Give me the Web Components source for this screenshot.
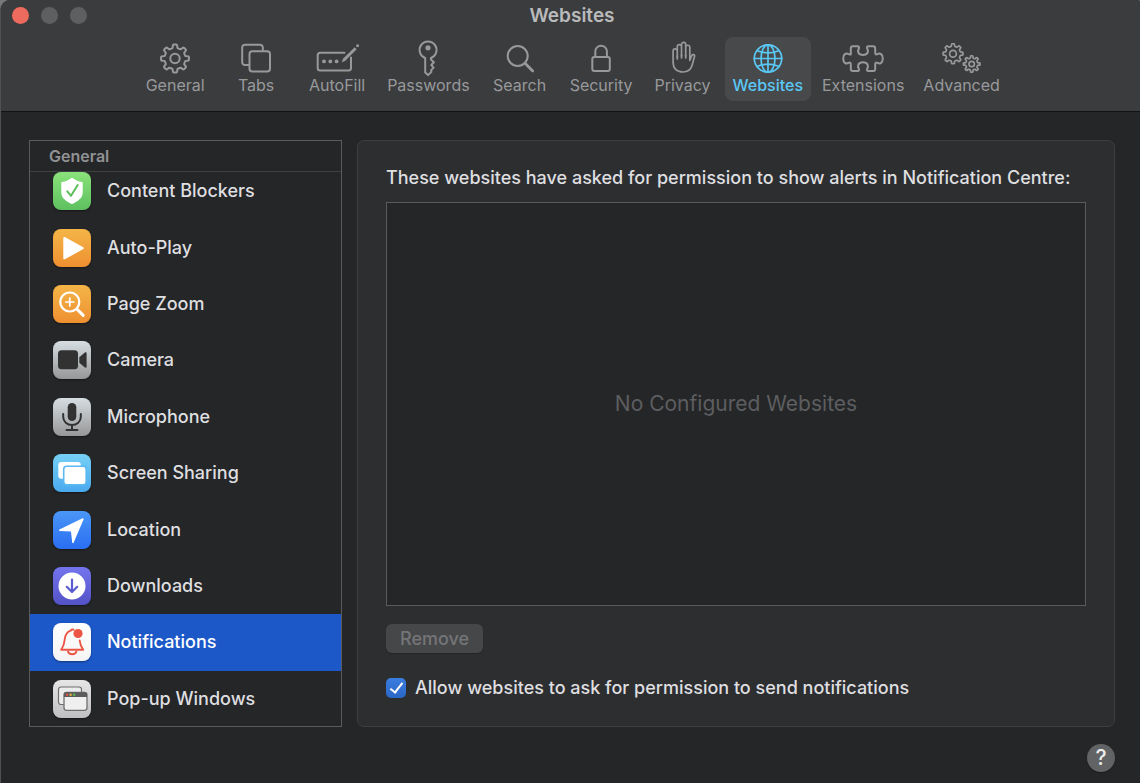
<!DOCTYPE html>
<html lang="en">
<head>
<meta charset="utf-8">
<title>Websites</title>
<style>
  body { margin: 0; background: #77787a; font-family: Inter, "Noto Sans", sans-serif; }
</style>
</head>
<body>
<prefs-window>
  <title-bar slot="header">Websites</title-bar>
  <pref-toolbar slot="header">
    <toolbar-item icon="general">General</toolbar-item>
    <toolbar-item icon="tabs">Tabs</toolbar-item>
    <toolbar-item icon="autofill">AutoFill</toolbar-item>
    <toolbar-item icon="passwords">Passwords</toolbar-item>
    <toolbar-item icon="search">Search</toolbar-item>
    <toolbar-item icon="security">Security</toolbar-item>
    <toolbar-item icon="privacy">Privacy</toolbar-item>
    <toolbar-item icon="websites" selected>Websites</toolbar-item>
    <toolbar-item icon="extensions">Extensions</toolbar-item>
    <toolbar-item icon="advanced">Advanced</toolbar-item>
  </pref-toolbar>
  <side-list heading="General">
    <side-item icon="blockers">Content Blockers</side-item>
    <side-item icon="play">Auto-Play</side-item>
    <side-item icon="zoom">Page Zoom</side-item>
    <side-item icon="camera">Camera</side-item>
    <side-item icon="mic">Microphone</side-item>
    <side-item icon="screen">Screen Sharing</side-item>
    <side-item icon="location">Location</side-item>
    <side-item icon="downloads">Downloads</side-item>
    <side-item icon="bell" selected>Notifications</side-item>
    <side-item icon="popup">Pop-up Windows</side-item>
  </side-list>
  <site-panel>
    <span slot="heading">These websites have asked for permission to show alerts in Notification Centre:</span>
    <span slot="empty">No Configured Websites</span>
    <span slot="action">Remove</span>
    <span slot="option">Allow websites to ask for permission to send notifications</span>
  </site-panel>
  <help-button slot="footer">?</help-button>
</prefs-window>

<script>
// Outline of a cog: flat-topped teeth, the first one pointing up.
function gear(cx, cy, outer, inner, teeth) {
  const step = Math.PI * 2 / teeth;
  const at = (r, a) => (cx + r * Math.sin(a)).toFixed(2) + ' ' + (cy - r * Math.cos(a)).toFixed(2);
  let d = '';
  for (let i = 0; i < teeth; i++) {
    const a = i * step;
    d += (i ? 'L' : 'M') + at(inner, a - step * .29);
    d += 'L' + at(outer - 1, a - step * .21) + 'Q' + at(outer, a - step * .2) + ' ' + at(outer, a - step * .12);
    d += 'L' + at(outer, a + step * .12) + 'Q' + at(outer, a + step * .2) + ' ' + at(outer - 1, a + step * .21);
    d += 'L' + at(inner, a + step * .29);
    d += 'Q' + at(inner - .6, a + step * .5) + ' ' + at(inner, a + step * .71);
  }
  return d + 'Z';
}

const LINE = {
  general: `<path d="${gear(22, 19.5, 14, 10.8, 8)}"/><circle cx="22" cy="19.5" r="4.7"/>`,
  tabs: `<path d="M14.5 26H11a2.8 2.8 0 0 1-2.8-2.8V8.500a2.800 2.800 0 0 1 2.800-2.800h15a2.800 2.800 0 0 1 2.800 2.800V11"/><rect x="15.500" y="12.300" width="20.500" height="20.200" rx="2.800"/>`,
  autofill: `<path d="M29.500 13.700H5.200a2.500 2.500 0 0 0-2.500 2.500v12.700a2.500 2.500 0 0 0 2.500 2.500h28.300a2.500 2.500 0 0 0 2.500-2.500V18.500"/><g fill="currentColor" stroke="none"><circle cx="9" cy="22.400" r="1.900"/><circle cx="15.300" cy="22.400" r="1.900"/><circle cx="21.600" cy="22.400" r="1.900"/><path d="M26.600 23.600l1.600-4L39.700 8.200l2 2L30.300 21.700z"/><circle cx="42.600" cy="6.700" r="1.500"/></g>`,
  passwords: `<path d="M19.200 19A8.500 8.500 0 1 1 24.900 19L25 20.500l2.900 2.700-2.600 2.800 2.300 2.600-2.400 2.500.2 1.800-3.300 3.200-2.900-2.600z"/><circle cx="22" cy="8.800" r="2.600" fill="currentColor" stroke="none"/>`,
  search: `<circle cx="19.700" cy="17" r="10"/><path d="M27.300 24.500l7.400 7.400" stroke-width="2.800"/>`,
  security: `<rect x="13.300" y="18" width="17.500" height="14" rx="2"/><path d="M16.300 18v-5.500a5.800 5.800 0 0 1 11.600 0V18"/>`,
  privacy: `<path d="M12.100 23V12a2.100 2.100 0 0 1 4.200 0v6V7.700a2.100 2.100 0 0 1 4.200 0V17 5.500a2.100 2.100 0 0 1 4.200 0V17 7.900a2.100 2.100 0 0 1 4.100 0V21.500l2-5c.6-1.500 3.300-1 2.800.8l-2.500 9c-1.300 4.400-4.300 6.700-9 6.700-6.500 0-10-3.500-10-10z" stroke-width="1.700"/><path d="M16.300 17v3M20.500 16v3M24.700 16v3" stroke-width="1.700"/>`,
  websites: `<g stroke-width="1.700"><circle cx="22" cy="19.500" r="13.700"/><ellipse cx="22" cy="19.500" rx="7" ry="13.700"/><path d="M22 5.800v27.400M8.300 19.500h27.400M11.500 11.700q10.500 4.500 21 0M11.500 27.300q10.500-4.500 21 0"/></g>`,
  extensions: `<path d="M9.800 15.500V9.300a2 2 0 0 1 2-2h4.700c1.500 0 2 1.200 1.300 2.300-1.600 2.600-.7 6.400 4.200 6.400s5.800-3.800 4.200-6.400c-.7-1.100-.2-2.300 1.300-2.300h4.700a2 2 0 0 1 2 2v4.500c0 1.600 1 2 2.200 1.300 2.600-1.500 5.400.2 5.400 4.400s-2.800 5.900-5.400 4.400c-1.200-.7-2.200-.3-2.200 1.300V30a2 2 0 0 1-2 2h-4.700c-1.500 0-2-1.200-1.300-2.300 1.600-2.600.7-6.400-4.200-6.400s-5.800 3.800-4.200 6.400c.7 1.100.2 2.300-1.300 2.300h-4.700a2 2 0 0 1-2-2v-4.800c0-1.600-1-2-2.200-1.300-2.600 1.500-5.400-.2-5.400-4.400s2.800-5.900 5.400-4.400c1.200.7 2.200.3 2.200-1.300z"/>`,
  advanced: `<g stroke-width="1.700"><path d="${gear(13, 14.7, 10, 7.7, 8)}"/><circle cx="13" cy="14.700" r="3.400"/><path d="${gear(31.700, 25, 8.300, 6.200, 8)}"/><circle cx="31.700" cy="25" r="2.700"/></g>`
};

// Coloured tiles: gradient top, gradient bottom, glyph on a 38-unit grid.
const TILE = {
  blockers: ['#8ae27a', '#5ec060', '<path fill="#fff" d="M19 5.700q5.300 4 10.700 4.600v9.900c0 6.500-5.500 9.200-10.700 11.900-5.200-2.700-10.700-5.400-10.700-11.900v-9.900q5.400-.6 10.700-4.600z"/><path d="M14.300 19.300l3.700 4.500 6.700-10.800" fill="none" stroke="#5cbf5c" stroke-width="2" stroke-linecap="round" stroke-linejoin="round"/>'],
  play: ['#f4b548', '#ee9030', '<path fill="#fff" stroke="#fff" stroke-width="2" stroke-linejoin="round" d="M11.300 9v20.500L29.800 19.200z"/>'],
  zoom: ['#f4b548', '#ee9030', '<g fill="none" stroke="#fff" stroke-width="2.200" stroke-linecap="round"><circle cx="16.800" cy="17" r="9.500"/><path d="M16.800 13v8M12.800 17h8" stroke-width="1.700"/><path d="M24.200 24.400l6 6" stroke-width="3"/></g>'],
  camera: ['#d6dee2', '#979797', '<rect x="5" y="9.300" width="20" height="19" rx="3.500" fill="#323232"/><path fill="#323232" d="M26.300 16.200l5.300-4.500c1-.8 2-.4 2 .9v12.800c0 1.300-1 1.700-2 .9l-5.300-4.500z"/>'],
  mic: ['#d6dee2', '#979797', '<rect x="14.700" y="5" width="8.600" height="18" rx="4.300" fill="#323232"/><path d="M10.200 16v3a8.800 8 0 0 0 17.600 0v-3M19 27v5M13.500 32h11" fill="none" stroke="#323232" stroke-width="2" stroke-linecap="round"/>'],
  screen: ['#76d0f5', '#4aa9ee', '<rect x="5.300" y="8" width="22.500" height="16.800" rx="3" fill="#fff"/><rect x="10.700" y="12.300" width="22.500" height="18.500" rx="3" fill="#fff" stroke="#5cb8f1" stroke-width="1.600"/>'],
  location: ['#4a97f7', '#2a6ef2', '<path fill="#fff" stroke="#fff" stroke-width="1.600" stroke-linejoin="round" d="M6.800 19.200L29.900 8 20 31.300l-1.300-11.500z"/>'],
  downloads: ['#7474ee', '#5352c6', '<circle cx="19" cy="19" r="13.500" fill="#fff"/><path d="M19 12.500v12M13.800 19.800L19 25l5.200-5.200" fill="none" stroke="#5b5bd2" stroke-width="2.200" stroke-linecap="round" stroke-linejoin="round"/>'],
  bell: ['#ffffff', '#f4f4f5', '<g fill="none" stroke="#ec5545" stroke-width="1.900" stroke-linecap="round" stroke-linejoin="round"><path d="M20.500 6.700q-1.500-.7-2.800.9c-4.300 1.400-5.700 5-6.100 9.400-.4 4.800-1.300 6.800-3.400 9.800h22c-2.100-3-3.100-5-3.500-9.300"/><path d="M15 28.500a4.300 3.500 0 0 0 8.400 0"/></g><circle cx="25" cy="10.500" r="4.600" fill="#ec5545"/>'],
  popup: ['#e6e6e6', '#bfbfc1', '<rect x="5.500" y="7" width="23" height="17.500" rx="2.500" fill="#ececec" stroke="#6f6f70" stroke-width="1.200"/><rect x="11" y="12.300" width="23" height="18" rx="2.500" fill="#efefef" stroke="#6f6f70" stroke-width="1.300"/><path fill="#5b5b5c" d="M11 17v-2.200a2.500 2.500 0 0 1 2.500-2.500h18a2.500 2.500 0 0 1 2.500 2.500V17z"/><circle cx="14" cy="14.700" r="1.200" fill="#e2504a"/><circle cx="17.600" cy="14.700" r="1.200" fill="#e9b43c"/><circle cx="21.200" cy="14.700" r="1.200" fill="#58bf4f"/>']
};

class ShadowElement extends HTMLElement {
  connectedCallback() {
    if (!this.shadowRoot) this.attachShadow({ mode: 'open' }).innerHTML = this.render();
  }
}

customElements.define('prefs-window', class extends ShadowElement {
  render() {
    return `<style>
      :host { display: flex; flex-direction: column; box-sizing: border-box; min-height: 100vh;
        background: #252628; border-left: 1px solid #505153; border-radius: 10px 3px 0 0; overflow: hidden; }
      header { background: #3b3c3e; border-bottom: 1px solid #111213; padding: 0 0 10px 3px; }
      main { flex: 1; display: flex; gap: 15px; padding: 28px 25px 0 28px; }
      footer { display: flex; justify-content: flex-end; padding: 17px 25px 11px; }
    </style>
    <header><slot name="header"></slot></header>
    <main><slot></slot></main>
    <footer><slot name="footer"></slot></footer>`;
  }
});

customElements.define('title-bar', class extends ShadowElement {
  render() {
    return `<style>
      :host { display: grid; grid-template-columns: 1fr auto 1fr; height: 31px; align-items: center; margin-bottom: 6px; }
      .lights { display: flex; gap: 12px; padding-left: 8px; }
      button { width: 17px; height: 17px; border: 0; padding: 0; border-radius: 50%; background: #5e5f61; }
      button:first-child { background: #ed6a5e; }
      h1 { margin: 0; font-size: 19px; line-height: 24px; font-weight: 600; color: #b9babb; }
    </style>
    <div class="lights"><button aria-label="Close"></button><button aria-label="Minimise"></button><button aria-label="Full screen"></button></div>
    <h1><slot></slot></h1>`;
  }
});

customElements.define('pref-toolbar', class extends ShadowElement {
  render() {
    return `<style>
      :host { display: block; }
      nav { display: flex; justify-content: center; gap: 3px; }
    </style><nav aria-label="Preferences"><slot></slot></nav>`;
  }
});

customElements.define('toolbar-item', class extends ShadowElement {
  render() {
    return `<style>
      :host { display: block; color: #98999b; }
      :host([selected]) { color: #5ac8f5; }
      button { display: flex; flex-direction: column; align-items: center; min-width: 78px; padding: 2px 8px 8px;
        border: 0; border-radius: 8px; background: none; color: inherit; font: 400 16px/16px Inter, sans-serif; }
      :host([selected]) button { background: #48494b; font-weight: 500; }
      svg { width: 44px; height: 38px; fill: none; stroke: currentColor; stroke-width: 2; stroke-linecap: round; stroke-linejoin: round; }
    </style>
    <button><svg viewBox="0 0 44 38" aria-hidden="true">${LINE[this.getAttribute('icon')]}</svg><span><slot></slot></span></button>`;
  }
});

customElements.define('side-list', class extends ShadowElement {
  render() {
    return `<style>
      :host { display: flex; flex-direction: column; box-sizing: border-box; flex: 0 0 313px; border: 1px solid #5a5b5d; }
      h2 { margin: 0; padding: 1px 19px 0; border-bottom: 1px solid #3f4042; font-size: 16px; line-height: 29px; font-weight: 600; color: #919294; }
      .scroll { flex: 1; display: flex; overflow: hidden; }
      .rows { flex: 1; display: flex; flex-direction: column; margin: -9px 0 -1px; }
    </style>
    <h2>${this.getAttribute('heading')}</h2>
    <div class="scroll"><div class="rows"><slot></slot></div></div>`;
  }
});

customElements.define('side-item', class extends ShadowElement {
  render() {
    const name = this.getAttribute('icon');
    const [top, bottom, glyph] = TILE[name];
    return `<style>
      :host { display: flex; flex: 1 0 56px; color: #dfdfe0; }
      :host([selected]) { background: #1c58c8; color: #fff; }
      button { flex: 1; display: flex; align-items: center; gap: 16px; padding: 0 23px; border: 0; background: none; color: inherit;
        font: 500 18px/24px Inter, sans-serif; text-align: left; }
      svg { width: 38px; height: 38px; border-radius: 8px; background: linear-gradient(${top}, ${bottom}); box-shadow: 0 1px 2px rgba(0,0,0,.4); }
    </style>
    <button><svg viewBox="0 0 38 38" aria-hidden="true">${glyph}</svg><span><slot></slot></span></button>`;
  }
});

customElements.define('site-panel', class extends ShadowElement {
  render() {
    return `<style>
      :host { flex: 1; display: flex; flex-direction: column; align-items: flex-start; box-sizing: border-box; min-width: 0;
        padding: 25px 28px 26px; border: 1px solid #3d3e40; border-radius: 7px; background: #2d2e30; color: #dfdfe0;
        font-size: 18px; line-height: 24px; font-weight: 500; }
      p { margin: 0 0 12px; }
      .list { flex: 1; align-self: stretch; display: grid; place-items: center; border: 1px solid #5a5b5d; background: #252628; color: #5d5e60;
        font-size: 21px; line-height: 28px; font-weight: 400; }
      button { margin: 18px 0 23px; height: 29px; padding: 0 14px; border: 0; border-radius: 6px; background: #464749; color: #747577;
        font: 500 18px/28px Inter, sans-serif; box-shadow: 0 1px 1px rgba(0,0,0,.2); }
      label { display: flex; align-items: center; gap: 9px; }
      input { appearance: none; margin: 0; width: 20px; height: 20px; border-radius: 5px;
        background: linear-gradient(#3a7ee0, #2a66c6); display: grid; place-items: center; }
      input:checked::before { content: ""; width: 5px; height: 11px; margin-top: -3px; border: solid #fff; border-width: 0 2px 2px 0; transform: rotate(38deg); }
    </style>
    <p><slot name="heading"></slot></p>
    <div class="list"><slot name="empty"></slot></div>
    <button disabled><slot name="action"></slot></button>
    <label for="allow"><input id="allow" type="checkbox" checked><slot name="option"></slot></label>`;
  }
});

customElements.define('help-button', class extends ShadowElement {
  render() {
    return `<style>
      :host { display: block; }
      button { width: 28px; height: 28px; padding: 0; border: 0; border-radius: 50%; background: #626365; color: #ececec;
        font: 500 21px/28px Inter, sans-serif; box-shadow: 0 1px 1px rgba(0,0,0,.3); }
    </style><button title="Help"><slot></slot></button>`;
  }
});
</script>
</body>
</html>
